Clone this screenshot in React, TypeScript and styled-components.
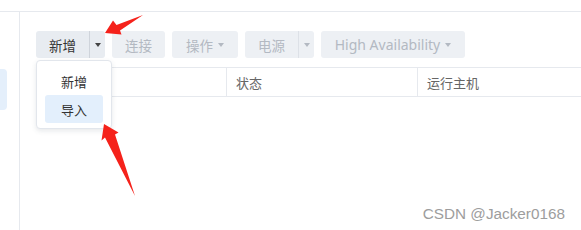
import styled, { createGlobalStyle } from 'styled-components';

const GlobalStyle = createGlobalStyle`
  html, body {
    margin: 0;
    padding: 0;
    background: #ffffff;
  }
  body {
    font-family: 'Noto Sans', 'Noto Sans CJK SC', sans-serif;
    font-size: 13px;
    color: #333;
    overflow: hidden;
  }
`;

const Frame = styled.div`
  position: relative;
  width: 581px;
  height: 230px;
  display: flex;
  flex-direction: column;
  overflow: hidden;
`;

const TopBar = styled.div`
  height: 11px;
  flex: none;
  border-bottom: 1px solid #e6e9ee;
`;

const Body = styled.div`
  flex: 1;
  display: flex;
`;

const Sidebar = styled.div`
  width: 19px;
  flex: none;
  border-right: 1px solid #e6e9ee;
  padding-top: 57px;
`;

const SideItem = styled.div`
  width: 7px;
  height: 41px;
  background: #e4effb;
  border-radius: 0 4px 4px 0;
`;

const Main = styled.div`
  flex: 1;
  padding: 19px 0 0 16px;
`;

const Toolbar = styled.div`
  display: flex;
  gap: 7px;
  height: 27px;
`;

const Group = styled.div`
  position: relative;
  display: flex;
`;

const Button = styled.div<{ $disabled?: boolean; $split?: boolean; $w?: number; $latin?: boolean }>`
  height: 27px;
  width: ${(p) => (p.$w ? `${p.$w}px` : 'auto')};
  box-sizing: border-box;
  display: flex;
  align-items: center;
  justify-content: center;
  gap: 5px;
  background: ${(p) => (p.$disabled ? '#edf0f4' : '#e8ecf1')};
  color: ${(p) => (p.$disabled ? '#b3b9c2' : '#333')};
  font-size: ${(p) => (p.$latin ? '14px' : '13.5px')};
  border-radius: ${(p) => (p.$split ? '3px 0 0 3px' : '3px')};
  white-space: nowrap;
`;

const CaretButton = styled.div<{ $disabled?: boolean }>`
  width: 15px;
  height: 27px;
  display: flex;
  align-items: center;
  justify-content: center;
  background: ${(p) => (p.$disabled ? '#edf0f4' : '#e8ecf1')};
  border-left: 1px solid ${(p) => (p.$disabled ? '#dde1e7' : '#cfd4db')};
  border-radius: 0 3px 3px 0;
`;

const Caret = styled.span<{ $disabled?: boolean }>`
  width: 0;
  height: 0;
  border-left: 3.5px solid transparent;
  border-right: 3.5px solid transparent;
  border-top: 4px solid ${(p) => (p.$disabled ? '#b3b9c2' : '#444')};
`;

const Menu = styled.div`
  position: absolute;
  top: 29px;
  left: 0;
  width: 76px;
  box-sizing: border-box;
  padding: 6px 8px 5px;
  background: #fff;
  border: 1px solid #e2e6ec;
  border-radius: 4px;
  box-shadow: 0 2px 5px rgba(60, 70, 90, 0.12);
  z-index: 2;
`;

const MenuItem = styled.div<{ $active?: boolean }>`
  height: 28px;
  display: flex;
  align-items: center;
  justify-content: center;
  border-radius: 3px;
  font-size: 13px;
  color: #333;
  background: ${(p) => (p.$active ? '#e3effc' : 'transparent')};
`;

const TableHeader = styled.div`
  margin-top: 9px;
  height: 28px;
  display: grid;
  grid-template-columns: 190px 191px 1fr;
  border-top: 1px solid #e6e9ee;
  border-bottom: 1px solid #e6e9ee;
`;

const HeadCell = styled.div<{ $first?: boolean }>`
  display: flex;
  align-items: center;
  padding-left: 9px;
  color: #666;
  font-size: 13px;
  border-left: ${(p) => (p.$first ? 'none' : '1px solid #e6e9ee')};
`;

const Arrows = styled.svg`
  position: absolute;
  left: 0;
  top: 0;
  pointer-events: none;
  z-index: 3;
`;

const Watermark = styled.div`
  position: absolute;
  right: 16px;
  bottom: 7px;
  font-family: 'Liberation Sans', Arial, sans-serif;
  font-size: 15.3px;
  color: #9d9d9d;
`;

const App = () => {
  return (
    <Frame>
      <GlobalStyle />
      <TopBar />
      <Body>
        <Sidebar>
          <SideItem />
        </Sidebar>
        <Main>
          <Toolbar>
            <Group>
              <Button $split $w={53}>新增</Button>
              <CaretButton>
                <Caret />
              </CaretButton>
              <Menu>
                <MenuItem>新增</MenuItem>
                <MenuItem $active>导入</MenuItem>
              </Menu>
            </Group>
            <Button $disabled $w={53}>连接</Button>
            <Button $disabled $w={66}>
              操作 <Caret $disabled />
            </Button>
            <Group>
              <Button $disabled $split $w={53}>电源</Button>
              <CaretButton $disabled>
                <Caret $disabled />
              </CaretButton>
            </Group>
            <Button $disabled $latin $w={144}>
              High Availability <Caret $disabled />
            </Button>
          </Toolbar>
          <TableHeader>
            <HeadCell $first />
            <HeadCell>状态</HeadCell>
            <HeadCell>运行主机</HeadCell>
          </TableHeader>
        </Main>
      </Body>
      <Arrows width={581} height={230} viewBox="0 0 581 230">
        <polygon
          fill="#f5221b"
          points="143,15 120,30.5 121.5,34.5 105,33 113,20.5 116.5,25"
        />
        <polygon
          fill="#f5221b"
          points="135,196 115,134.5 118.5,132.5 104,124 101.5,140.5 105,137.5"
        />
      </Arrows>
      <Watermark>CSDN @Jacker0168</Watermark>
    </Frame>
  );
};

export default App;
